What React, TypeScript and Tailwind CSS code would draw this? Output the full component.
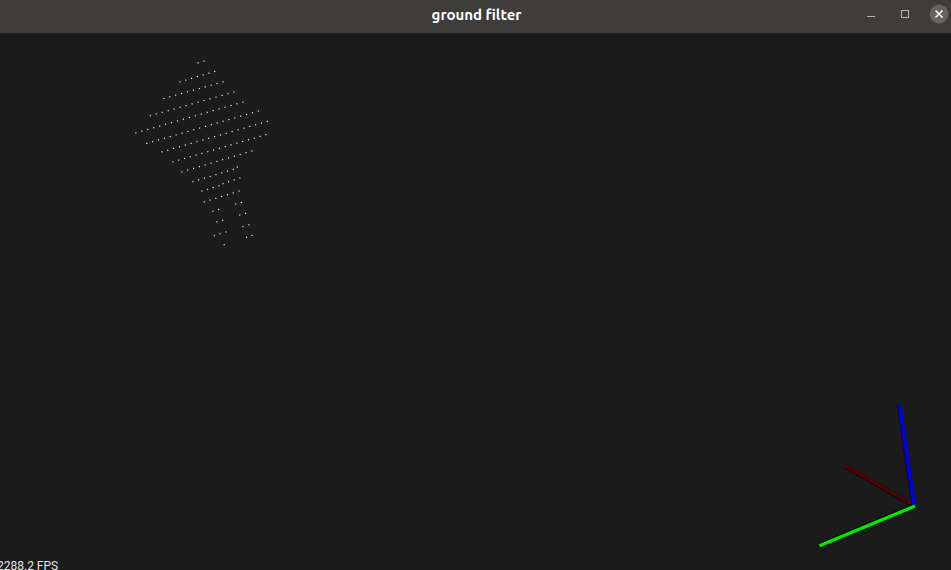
import React from "react";

// Scan lines of the point cloud: first point, last point, number of points.
const scanLines: [number, number, number, number, number][] = [
  [198.2, 63, 204.2, 61.3, 2],
  [180.2, 82, 215, 71.5, 7],
  [164.1, 98.6, 223.2, 82, 11],
  [150.5, 115.8, 234.2, 92.2, 15],
  [136.1, 133, 243.1, 102.2, 19],
  [147, 143.5, 258.5, 111.2, 20],
  [162.1, 152, 267.5, 121.5, 19],
  [173.1, 162, 266.2, 134.8, 17],
  [182.1, 172, 252.1, 151.1, 13],
  [193.1, 181.8, 233.5, 169.5, 8],
  [237.5, 167.2, 237.5, 167.2, 1],
  [202.1, 191.1, 219.1, 186, 4],
  [223.2, 183.8, 240.1, 178.1, 4],
  [204.5, 202.1, 239.2, 191.2, 7],
  [236, 204.1, 241.5, 202.5, 2],
  [213.1, 211.4, 218.8, 209.6, 2],
  [240, 215.1, 245.8, 213.5, 2],
  [217.1, 222.1, 222.9, 220.5, 2],
  [243.1, 226.8, 249.1, 225, 2],
  [214.6, 235.8, 226, 232.1, 3],
  [246.8, 237.4, 252.2, 235.5, 2],
  [224.4, 244.8, 224.4, 244.8, 1],
];

const points = scanLines.flatMap(([x0, y0, x1, y1, count]) =>
  Array.from({ length: count }, (_, i) => {
    const t = count > 1 ? i / (count - 1) : 0;
    return { x: x0 + (x1 - x0) * t, y: y0 + (y1 - y0) * t };
  }),
);

function TitleBar() {
  return (
    <header className="grid h-[33px] shrink-0 grid-cols-[1fr_auto_1fr] items-center bg-[#3e3d3b]">
      <h1 className="col-start-2 pb-1 pl-0.5 text-[15px] leading-5 font-bold text-white">ground filter</h1>
      <div className="flex items-center justify-end gap-3 pb-1">
        <button type="button" aria-label="Minimize" className="flex size-[22px] items-center justify-center">
          <svg width="22" height="22" viewBox="0 0 22 22" shapeRendering="crispEdges">
            <rect x="6" y="12" width="8" height="1" fill="#b5b4b2" />
          </svg>
        </button>
        <button type="button" aria-label="Maximize" className="flex size-[22px] items-center justify-center">
          <svg width="22" height="22" viewBox="0 0 22 22">
            <rect x="6.5" y="6.5" width="7" height="7" fill="none" stroke="#b5b4b2" />
          </svg>
        </button>
        <button type="button" aria-label="Close" className="flex size-[22px] items-center justify-center">
          <svg width="22" height="22" viewBox="0 0 22 22">
            <circle cx="10" cy="10" r="9.4" fill="#646361" />
            <path d="M6.5 6.5l7 7M13.5 6.5l-7 7" stroke="#fff" strokeWidth="1.7" />
          </svg>
        </button>
      </div>
    </header>
  );
}

function PointCloud() {
  return (
    <svg width="290" height="230" viewBox="0 33 290 230" role="img" aria-label="Point cloud">
      {points.map(({ x, y }, i) => (
        <rect key={i} x={x - 0.8} y={y - 0.7} width="1.15" height="1.15" fill="#fff" />
      ))}
    </svg>
  );
}

function Axes() {
  return (
    <svg
      className="mr-[31px] self-end"
      width="110"
      height="150"
      viewBox="810 400 110 150"
      role="img"
      aria-label="Coordinate axes"
    >
      <path d="M844.6 465.8L913 505.2" stroke="#0c0c0c" strokeWidth="4.4" />
      <path d="M844.4 465.4L913.5 505" stroke="#580000" strokeWidth="3" />
      <path d="M898.8 405.4L913 505" stroke="#0e0e10" strokeWidth="3.6" />
      <path d="M899.6 405L914.3 506" stroke="#0000e6" strokeWidth="3.6" />
      <path d="M820 544.2L914 505" stroke="#0c0c0c" strokeWidth="3.4" />
      <path d="M819.4 545.8L915 506" stroke="#00ec00" strokeWidth="3.2" />
    </svg>
  );
}

export default function App() {
  return (
    <div className="flex h-screen flex-col overflow-hidden bg-[#1b1b1b] font-['Ubuntu','Noto_Sans',sans-serif]">
      <TitleBar />
      <main className="flex min-h-0 flex-1 flex-col justify-between">
        <PointCloud />
        <div className="flex flex-col">
          <Axes />
          <p className="-ml-[3px] pt-3 font-['Roboto',sans-serif] text-[12px] leading-2 text-[#e6e6e6]">
            2288.2 FPS
          </p>
        </div>
      </main>
    </div>
  );
}
